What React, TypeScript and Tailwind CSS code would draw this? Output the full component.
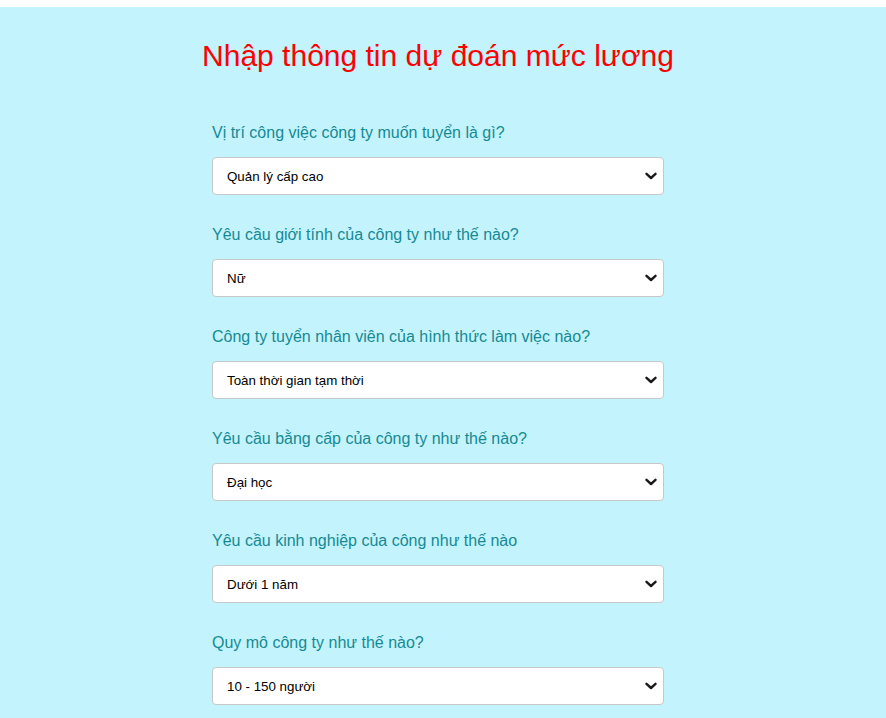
import React from "react";

const fields = [
  { label: "Vị trí công việc công ty muốn tuyển là gì?", value: "Quản lý cấp cao" },
  { label: "Yêu cầu giới tính của công ty như thế nào?", value: "Nữ" },
  { label: "Công ty tuyển nhân viên của hình thức làm việc nào?", value: "Toàn thời gian tạm thời" },
  { label: "Yêu cầu bằng cấp của công ty như thế nào?", value: "Đại học" },
  { label: "Yêu cầu kinh nghiệp của công như thế nào", value: "Dưới 1 năm" },
  { label: "Quy mô công ty như thế nào?", value: "10 - 150 người" },
];

function Chevron() {
  return (
    <svg width="12" height="8" viewBox="0 0 12 8" className="absolute right-[6px] top-1/2 -translate-y-1/2 pointer-events-none">
      <path d="M1.5 1.8l4.5 4.2 4.5-4.2" fill="none" stroke="#1a1a1a" strokeWidth="2.4" strokeLinecap="round" strokeLinejoin="round" />
    </svg>
  );
}

export default function App() {
  return (
    <div className="min-h-[718px] bg-white pt-[7px]" style={{ fontFamily: '"Liberation Sans", Arial, sans-serif' }}>
      <div className="bg-[#c3f3fd] min-h-[711px] flex justify-center pr-[10px]">
        <div className="w-[472px] flex flex-col items-center">
          <h1 className="text-[30px] leading-[35px] text-[#ff0000] mt-[31px] whitespace-nowrap">
            Nhập thông tin dự đoán mức lương
          </h1>
          <div className="w-[452px] mt-[51px] flex flex-col gap-[31px]">
            {fields.map((f, i) => (
              <div key={i} className="flex flex-col">
                <label className="text-[16px] leading-[18px] text-[#168a94] mb-[15px] whitespace-nowrap">{f.label}</label>
                <div className="relative h-[38px] bg-white border border-[#c8c8c8] rounded-[4px]">
                  <div className="h-full flex items-center pl-[14px] pt-[2px] text-[13.33px] text-black">{f.value}</div>
                  <Chevron />
                </div>
              </div>
            ))}
          </div>
        </div>
      </div>
    </div>
  );
}
